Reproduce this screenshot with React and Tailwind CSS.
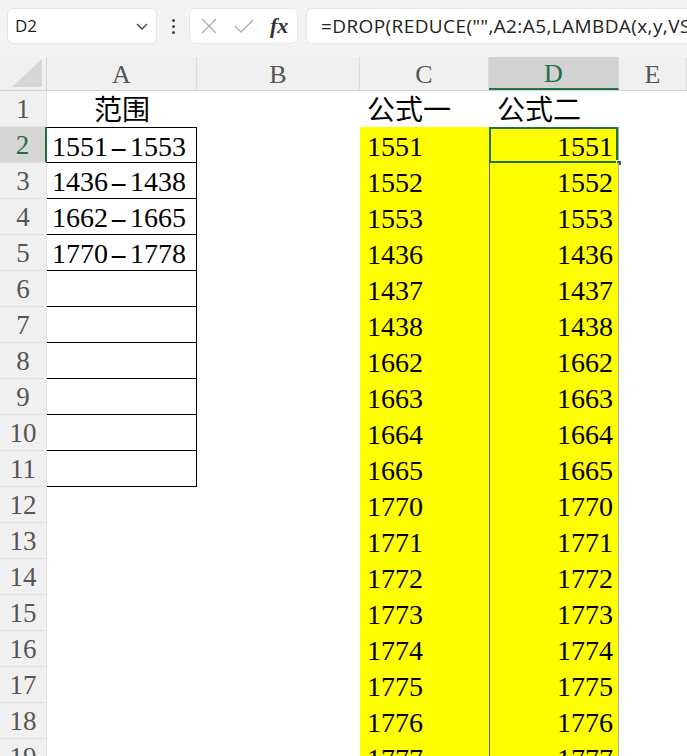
import React from "react";

const serif = { fontFamily: '"Liberation Serif", "Noto Sans CJK SC", serif' };

// column C values (text, left) and D values (numbers, right)
const values = [
  "1551", "1552", "1553", "1436", "1437", "1438", "1662", "1663", "1664",
  "1665", "1770", "1771", "1772", "1773", "1774", "1775", "1776", "1777",
];
const ranges = ["1551-1553", "1436-1438", "1662-1665", "1770-1778"];

// wide dash like the sheet's font
function RangeText({ text }) {
  const [a, b] = text.split("-");
  return (
    <span>
      {a}
      <span className="inline-block w-[22px] text-center">
        <span className="inline-block scale-x-[1.9]">-</span>
      </span>
      {b}
    </span>
  );
}

function Toolbar() {
  return (
    <div className="h-[57px] bg-[#f3f3f3] flex items-start pt-[8px] pl-[7px] gap-0">
      <div className="w-[150px] h-[36px] bg-white rounded-md border border-[#e6e6e6] flex items-center justify-between pl-[7px] pr-[7px]">
        <span className="text-[17px] text-[#222]" style={{ fontFamily: '"Open Sans", sans-serif' }}>D2</span>
        <svg width="14" height="14" viewBox="0 0 14 14">
          <path d="M2 5 L7 10 L12 5" fill="none" stroke="#444" strokeWidth="1.4" />
        </svg>
      </div>
      <div className="w-[32px] h-[36px] flex flex-col items-center justify-center gap-[3px]">
        <span className="w-[3px] h-[3px] bg-[#444] rounded-full" />
        <span className="w-[3px] h-[3px] bg-[#444] rounded-full" />
        <span className="w-[3px] h-[3px] bg-[#444] rounded-full" />
      </div>
      <div className="w-[109px] h-[36px] bg-white rounded-md border border-[#e6e6e6] flex items-center pl-[10px] gap-[16px]">
        <svg width="18" height="18" viewBox="0 0 18 18">
          <path d="M2 2 L16 16 M16 2 L2 16" stroke="#aaa" strokeWidth="1.3" />
        </svg>
        <svg width="20" height="18" viewBox="0 0 20 18">
          <path d="M1 9 L7 15 L19 3" fill="none" stroke="#aaa" strokeWidth="1.3" />
        </svg>
        <span className="text-[22px] italic font-bold text-[#333] leading-none" style={{ fontFamily: '"Liberation Serif", serif' }}>fx</span>
      </div>
      <div className="ml-[8px] flex-1 h-[36px] bg-white rounded-l-md border border-[#e6e6e6] border-r-0 flex items-center pl-[14px] overflow-hidden whitespace-nowrap">
        <span className="text-[19px] tracking-[0.4px] text-[#222]" style={{ fontFamily: '"Open Sans", sans-serif' }}>
          =DROP(REDUCE("",A2:A5,LAMBDA(x,y,VSTACK(x,SEQUENCE(
        </span>
      </div>
    </div>
  );
}

function ColHeaders() {
  const cols = [
    { l: "A", w: "w-[150px]" },
    { l: "B", w: "w-[163px]" },
    { l: "C", w: "w-[129px]" },
    { l: "D", w: "w-[130px]", sel: true },
    { l: "E", w: "flex-1" },
  ];
  return (
    <div className="flex h-[34px] bg-[#f0f0f0] border-b border-[#d4d4d4]" style={serif}>
      <div className="w-[47px] border-r border-[#d4d4d4] relative overflow-hidden">
        <svg className="absolute right-[4px] bottom-[3px]" width="30" height="28" viewBox="0 0 30 28">
          <path d="M30 0 L30 28 L0 28 Z" fill="#d7d7d7" />
        </svg>
      </div>
      {cols.map((c) => (
        <div
          key={c.l}
          className={`${c.w} flex items-center justify-center pt-[2px] text-[26px] border-r border-[#dcdcdc] ${
            c.sel ? "bg-[#d2d2d2] text-[#1e6e42] border-b-2 border-b-[#217346]" : "text-[#555]"
          }`}
        >
          {c.l}
        </div>
      ))}
    </div>
  );
}

function Row({ n }) {
  const i = n - 2;
  const isSel = n === 2;
  const aBordered = n >= 2 && n <= 11;
  return (
    <div className="flex h-[36px]" style={serif}>
      <div
        className={`w-[47px] flex items-center justify-center pt-[2px] text-[27px] border-b border-[#e0e0e0] ${
          isSel ? "bg-[#d6d6d6] text-[#1e6e42] border-r-2 border-r-[#217346]" : "bg-[#f0f0f0] text-[#555] border-r border-[#d4d4d4]"
        }`}
      >
        {n}
      </div>
      <div
        className={`w-[150px] flex items-center pt-[3px] text-[28px] text-black ${
          aBordered ? "border-r border-b border-black" : ""
        } ${n === 2 ? "border-t border-black" : ""} ${n === 1 ? "justify-center" : "pl-[5px]"}`}
      >
        {n === 1 ? "范围" : ranges[i] ? <RangeText text={ranges[i]} /> : ""}
      </div>
      <div className="w-[163px]" />
      <div
        className={`w-[129px] flex items-center pt-[3px] pl-[7px] text-[28px] text-black ${
          n >= 2 ? "bg-[#ffff00]" : ""
        }`}
      >
        {n === 1 ? "公式一" : values[i]}
      </div>
      <div
        className={`w-[130px] relative flex items-center pt-[3px] text-[28px] text-black ${
          n >= 2 ? "bg-[#ffff00] border-l border-l-[#5f5f4a] border-r border-r-[#a8a8a8] justify-end pr-[5px]" : "pl-[8px]"
        }`}
      >
        {n === 1 ? "公式二" : values[i]}
        {isSel && (
          <>
            <div className="absolute inset-0 -left-[1px] border-2 border-[#217346] pointer-events-none" />
            <div className="absolute -right-[4px] -bottom-[3px] w-[6px] h-[6px] bg-[#217346] border border-white" />
          </>
        )}
      </div>
      <div className="flex-1" />
    </div>
  );
}

export default function App() {
  const rows = Array.from({ length: 19 }, (_, k) => k + 1);
  return (
    <div className="w-[687px] h-[756px] overflow-hidden bg-white">
      <Toolbar />
      <ColHeaders />
      {rows.map((n) => (
        <Row key={n} n={n} />
      ))}
    </div>
  );
}
